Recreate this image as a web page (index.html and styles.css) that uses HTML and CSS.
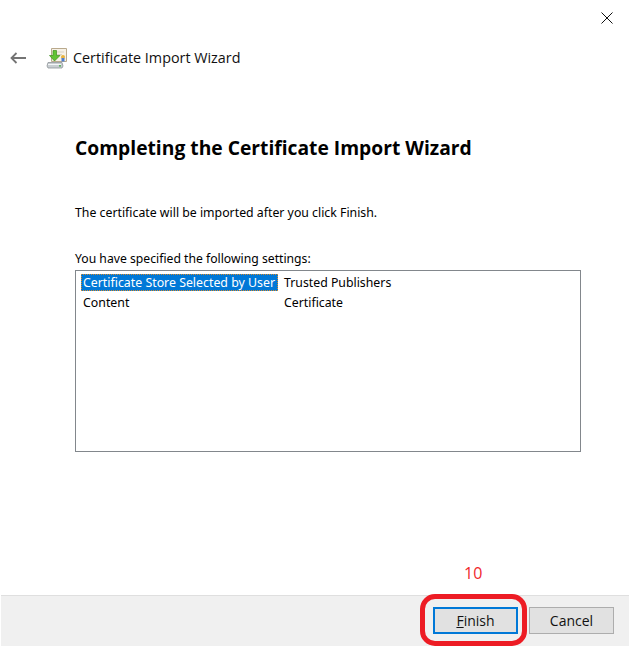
FILE: index.html
```html
<!DOCTYPE html>
<html lang="en">
<head>
  <meta charset="UTF-8">
  <meta name="viewport" content="width=device-width, initial-scale=1.0">
  <title>Certificate Import Wizard</title>
  <link rel="stylesheet" href="styles.css">
</head>
<body>
  <div class="wizard">
    <div class="title-bar">
      <button type="button" class="close-button" aria-label="Close">
        <svg width="12" height="12" viewBox="0 0 12 12"><path d="M.5.5l11 11M11.5.5l-11 11" stroke="#111" fill="none"/></svg>
      </button>
    </div>
    <div class="nav-row">
      <svg class="back-arrow" width="16" height="12" viewBox="0 0 16 12"><path d="M1 6h15M6.500 1L1.500 6l5 5" stroke="#747474" stroke-width="1.800" fill="none"/></svg>
      <svg class="wizard-icon" width="22" height="22" viewBox="0 0 22 22">
        <path d="M5.500 1.500h15v13h-15z" fill="#f6f1e6" stroke="#b9a98c"/>
        <path d="M10 5h8M10 7.500h6" stroke="#d9d2c4"/>
        <circle cx="17" cy="10" r="2" fill="#e9b23c"/>
        <path d="M15.500 11h3v3.500h-3z" fill="#4f7fd0"/>
        <path d="M2 15.500h14l1 3.500-1 2H2l-1-2z" fill="#c9ced2" stroke="#8e9498" stroke-width=".8"/>
        <path d="M2 17.500h13" stroke="#f4f6f7"/>
        <path d="M13 18.800h2" stroke="#3fa63f" stroke-width="1.200"/>
        <path d="M7 3.500h3.500v5H14L8.500 14 3.500 8.500H7z" fill="#62c334" stroke="#3d8f20" stroke-width=".7"/>
      </svg>
      <span class="nav-title">Certificate Import Wizard</span>
    </div>
    <div class="content">
      <h1 class="page-title">Completing the Certificate Import Wizard</h1>
      <p class="intro">The certificate will be imported after you click Finish.</p>
      <label class="list-label">You have specified the following settings:</label>
      <div class="settings-list">
        <div class="settings-row">
          <span class="col-name selected">Certificate Store Selected by User</span>
          <span class="col-value">Trusted Publishers</span>
        </div>
        <div class="settings-row">
          <span class="col-name">Content</span>
          <span class="col-value">Certificate</span>
        </div>
      </div>
    </div>
    <div class="footer">
      <button type="button" class="btn btn-default"><u>F</u>inish</button>
      <button type="button" class="btn">Cancel</button>
    </div>
    <span class="step-number">10</span>
    <div class="highlight-ring"></div>
  </div>
</body>
</html>
```

FILE: styles.css
```css
* {
  box-sizing: border-box;
  margin: 0;
  padding: 0;
}

html, body {
  height: 100%;
}

body {
  font-family: "Noto Sans", "Open Sans", Arial, sans-serif;
  font-size: 12.300px;
  background-color: #fff;
  color: #000;
  overflow: hidden;
}

.wizard {
  position: relative;
  display: flex;
  flex-direction: column;
  height: 647px;
}

.title-bar {
  display: flex;
  justify-content: flex-end;
  height: 38px;
}

.close-button {
  width: 44px;
  height: 38px;
  border: none;
  background: none;
  padding-right: 1px;
}

.nav-row {
  display: flex;
  align-items: center;
  height: 39px;
  padding-left: 10px;
}

.back-arrow {
  margin-right: 20px;
}

.wizard-icon {
  margin-right: 5px;
}

.nav-title {
  font-family: "Open Sans", sans-serif;
  font-size: 14.350px;
  color: #111;
}

.content {
  flex: 1;
  padding: 0 48px 0 75px;
}

.page-title {
  font-family: "Open Sans", sans-serif;
  font-size: 19.250px;
  font-weight: 700;
  line-height: 26px;
  margin-top: 58px;
  color: #000;
}

.intro {
  line-height: 16px;
  margin-top: 44px;
}

.list-label {
  display: block;
  font-size: 12.200px;
  line-height: 16px;
  margin-top: 30px;
}

.settings-list {
  height: 182px;
  border: 1px solid #82878c;
  margin-top: 3px;
  padding: 1px 0 0 5px;
}

.settings-row {
  display: flex;
  height: 20px;
  align-items: center;
}

.col-name {
  width: 197px;
  padding-left: 2px;
  font-size: 12.350px;
  line-height: 17px;
  white-space: nowrap;
}

.col-name.selected {
  background-color: #0078d7;
  color: #fff;
  outline: 1px dotted #d98a2b;
  outline-offset: -1px;
}

.col-value {
  padding-left: 6px;
}

.footer {
  display: flex;
  justify-content: flex-end;
  gap: 11px;
  height: 51px;
  margin: 0 0 1px 1px;
  padding: 11px 15px 0 0;
  background-color: #f0f0f0;
  border-top: 1px solid #dfdfdf;
}

.btn {
  width: 85px;
  height: 27px;
  font-family: "Open Sans", sans-serif;
  font-size: 14px;
  color: #111;
  background-color: #e1e1e1;
  border: 1px solid #adadad;
}

.btn-default {
  border: 2px solid #0078d7;
}

.step-number {
  position: absolute;
  left: 464px;
  top: 563px;
  font-family: "Open Sans", sans-serif;
  font-size: 16px;
  line-height: 20px;
  color: #f0272d;
}

.highlight-ring {
  position: absolute;
  left: 420px;
  top: 594px;
  width: 107px;
  height: 52px;
  border: 5px solid #ed1c24;
  border-radius: 15px;
}
```
